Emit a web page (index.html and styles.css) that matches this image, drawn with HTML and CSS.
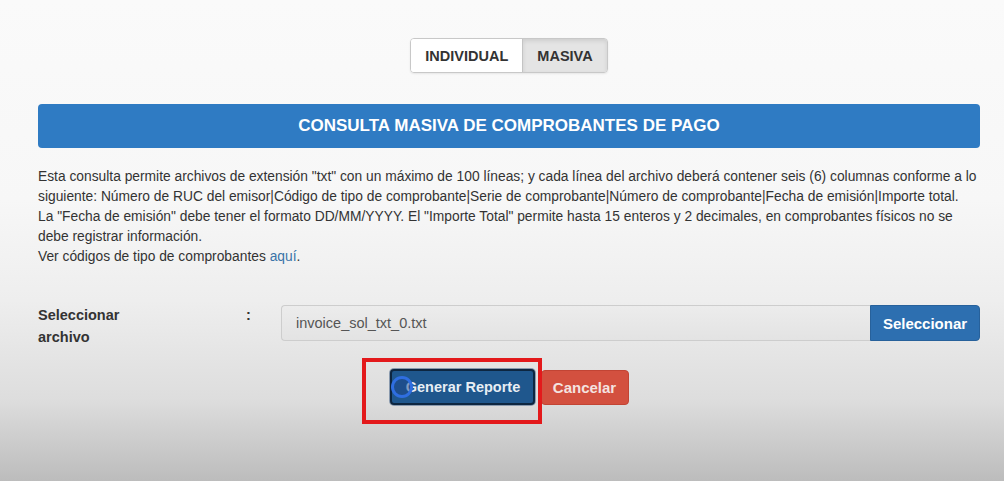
FILE: index.html
```html
<!DOCTYPE html>
<html lang="es">
<head>
<meta charset="utf-8">
<title>Consulta masiva</title>
<link rel="stylesheet" href="styles.css">
</head>
<body>
<main class="page">
  <div class="toggle">
    <button class="toggle-btn">INDIVIDUAL</button>
    <button class="toggle-btn active">MASIVA</button>
  </div>
  <h1 class="banner">CONSULTA MASIVA DE COMPROBANTES DE PAGO</h1>
  <p class="info">Esta consulta permite archivos de extensión "txt" con un máximo de 100 líneas; y cada línea del archivo deberá contener seis (6) columnas conforme a lo siguiente: Número de RUC del emisor|Código de tipo de comprobante|Serie de comprobante|Número de comprobante|Fecha de emisión|Importe total.<br>La "Fecha de emisión" debe tener el formato DD/MM/YYYY. El "Importe Total" permite hasta 15 enteros y 2 decimales, en comprobantes físicos no se debe registrar información.<br>Ver códigos de tipo de comprobantes <a class="link" href="#">aquí</a>.</p>
  <div class="form-row">
    <label class="label">Seleccionar<br>archivo</label>
    <span class="colon">:</span>
    <div class="file-group">
      <div class="file-input">invoice_sol_txt_0.txt</div>
      <button class="btn-select">Seleccionar</button>
    </div>
  </div>
  <div class="actions">
    <div class="highlight-wrap">
      <button class="btn-generate"><span class="spinner"></span>Generar Reporte</button>
      <span class="highlight"></span>
    </div>
    <button class="btn-cancel">Cancelar</button>
  </div>
</main>
</body>
</html>
```

FILE: styles.css
```css
html, body {
  margin: 0;
  height: 100%;
}
body {
  background: linear-gradient(to bottom, #fafafa 0px, #f7f7f7 200px, #eeeeee 300px, #dddddd 400px, #bcbcbc 481px);
  font-family: "Liberation Sans", Arial, sans-serif;
  color: #333;
  overflow: hidden;
}
.page {
  padding: 38px 24px 0 38px;
  display: flex;
  flex-direction: column;
}
.toggle {
  display: flex;
  align-self: center;
  border: 1px solid #c8c8c8;
  border-radius: 4px;
  overflow: hidden;
  box-shadow: 0 1px 2px rgba(0,0,0,0.08);
}
.toggle-btn {
  font-family: inherit;
  font-weight: bold;
  font-size: 14.5px;
  color: #333;
  background: #fff;
  border: 0;
  height: 33px;
  padding: 0 14px;
  margin: 0;
}
.toggle-btn.active {
  background: #e4e4e4;
  border-left: 1px solid #c4c4c4;
  box-shadow: inset 0 2px 4px rgba(0,0,0,0.1);
}
.banner {
  margin: 31px 0 0;
  height: 44px;
  background: #2f7bc3;
  border-radius: 4px;
  color: #fff;
  font-size: 17px;
  font-weight: bold;
  display: flex;
  align-items: center;
  justify-content: center;
}
.info {
  margin: 19px 0 0;
  font-size: 13.8px;
  line-height: 20px;
  color: #333;
}
.link {
  color: #3a74a8;
  text-decoration: none;
}
.form-row {
  margin-top: 38px;
  display: flex;
  align-items: flex-start;
}
.label {
  width: 208px;
  font-weight: bold;
  font-size: 14.5px;
  line-height: 22px;
  margin-top: -1px;
  color: #333;
}
.colon {
  width: 35px;
  font-weight: bold;
  font-size: 14.5px;
  line-height: 22px;
  margin-top: -1px;
}
.file-group {
  flex: 1;
  display: flex;
  height: 36px;
}
.file-input {
  flex: 1;
  background: linear-gradient(#ececec, #e3e3e3);
  border: 1px solid #cdcdcd;
  border-right: 0;
  border-radius: 4px 0 0 4px;
  font-size: 14.5px;
  color: #555;
  padding: 0 14px;
  display: flex;
  align-items: center;
}
.btn-select {
  width: 110px;
  background: #2d6fb0;
  border: 1px solid #27619b;
  border-radius: 0 4px 4px 0;
  color: #fff;
  font-family: inherit;
  font-weight: bold;
  font-size: 15px;
  padding: 0;
}
.actions {
  margin-top: 21px;
  display: flex;
  justify-content: center;
  gap: 6px;
}
.highlight-wrap {
  position: relative;
  display: flex;
}
.btn-generate {
  position: relative;
  width: 145px;
  height: 36px;
  background: #1f578d;
  border: 2px solid #0d2640;
  border-radius: 4px;
  box-shadow: 0 0 0 1px #8a9aae;
  color: #e8eef4;
  font-family: inherit;
  font-weight: bold;
  font-size: 14.5px;
  padding: 0 0 0 2px;
}
.spinner {
  position: absolute;
  left: -1px;
  top: 5px;
  width: 16px;
  height: 16px;
  border: 3px solid #2f6ee0;
  border-radius: 50%;
  background: rgba(30,70,140,0.5);
}
.highlight {
  position: absolute;
  left: -28px;
  top: -11px;
  width: 180px;
  height: 66px;
  box-sizing: border-box;
  border: 4px solid #e3191b;
  pointer-events: none;
}
.btn-cancel {
  width: 88px;
  height: 35px;
  background: #d3503f;
  border: 1px solid #c24434;
  border-radius: 4px;
  color: #f4e3e0;
  font-family: inherit;
  font-weight: bold;
  font-size: 15px;
  padding: 0;
  margin-top: 1px;
}
```
